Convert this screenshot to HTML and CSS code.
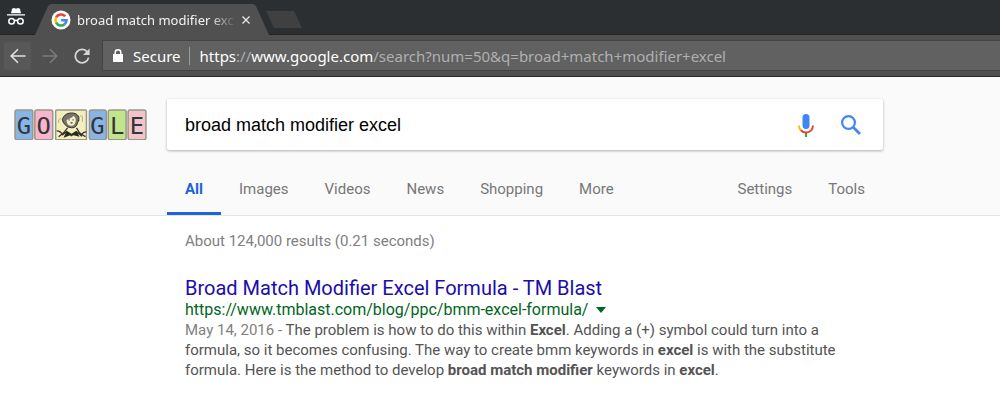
FILE: index.html
```html
<!DOCTYPE html>
<html lang="en">
<head>
<meta charset="utf-8">
<title>broad match modifier excel</title>
<link rel="stylesheet" href="styles.css">
</head>
<body>
<div class="tabstrip">
  <svg class="incognito" viewBox="0 0 18 18" aria-hidden="true">
    <path d="M5 .8 7 0 9 .7 11 0l2 .8 1 4.4H4zM0 6.2h18v1.4H0z" fill="#fff"/>
    <g fill="none" stroke="#fff" stroke-width="1.5"><circle cx="4.6" cy="13.2" r="2.8"/><circle cx="13.4" cy="13.2" r="2.8"/><path d="M7.4 12.8q1.6-1 3.2 0"/></g>
  </svg>
  <div class="tab">
    <svg class="favicon" viewBox="0 0 20 20" aria-hidden="true">
      <circle cx="10" cy="10" r="9.5" fill="#fff"/>
      <g fill="none" stroke-width="2.6">
        <path d="M14.2 6.4A5.6 5.6 0 0 0 5.1 7.4" stroke="#ea4335"/>
        <path d="M5.1 7.3a5.6 5.6 0 0 0 0 5.4" stroke="#fbbc05"/>
        <path d="M5.1 12.6a5.6 5.6 0 0 0 8.5 1.6" stroke="#34a853"/>
        <path d="M13.5 14.3a5.6 5.6 0 0 0 2-4H10.2" stroke="#4285f4"/>
      </g>
    </svg>
    <span class="tab-title">broad match modifier exc</span>
    <button class="tab-close" aria-label="Close tab"><svg viewBox="0 0 8 8"><path d="M.5.5l7 7m0-7l-7 7" stroke="#e8e8e8" stroke-width="1.3"/></svg></button>
  </div>
  <button class="new-tab" aria-label="New tab"></button>
</div>
<div class="toolbar">
  <button class="nav back" aria-label="Back"><svg viewBox="0 0 16 16"><path d="M15.5 8H1.5M8 1.2 1.2 8 8 14.8" fill="none" stroke="#e2e2e2" stroke-width="1.6"/></svg></button>
  <button class="nav forward" aria-label="Forward" disabled><svg viewBox="0 0 16 16"><path d="M.5 8h14M8 1.2 14.8 8 8 14.8" fill="none" stroke="#7b7b7b" stroke-width="1.6"/></svg></button>
  <button class="nav reload" aria-label="Reload"><svg viewBox="0 0 16 16"><path d="M13.4 4.1A6.7 6.7 0 1 0 14.6 9.6" fill="none" stroke="#d6d6d6" stroke-width="1.8"/><path d="M15.6.5v6.6H9z" fill="#d6d6d6"/></svg></button>
  <div class="address">
    <svg class="lock" viewBox="0 0 10 13" aria-hidden="true"><path d="M0 5h10v8H0z" fill="#fff"/><path d="M2.2 5.5V3.4a2.8 2.6 0 0 1 5.6 0v2.1" fill="none" stroke="#fff" stroke-width="1.5"/></svg>
    <span class="secure">Secure</span>
    <span class="url">https<span class="dim">://</span>www.google.com<span class="dim">/search?num=50&amp;q=broad+match+modifier+excel</span></span>
  </div>
</div>
<header class="header">
  <form class="search-row">
    <a class="logo" href="#" aria-label="Google">
      <svg viewBox="0 0 134 32">
        <g stroke="#99978b" stroke-width="1.5">
          <rect x="1" y="1" width="18" height="30" rx="2" fill="#86b5e6"/>
          <rect x="21" y="1" width="18" height="30" rx="2" fill="#f7b6cb"/>
          <rect x="42" y="1" width="31" height="30" rx="1" fill="#f3efbd"/>
          <rect x="76" y="1" width="17" height="30" rx="2" fill="#86b5e6"/>
          <rect x="95" y="1" width="18" height="30" rx="2" fill="#c2e58b"/>
          <rect x="115" y="1" width="18" height="30" rx="2" fill="#f2c3cb"/>
        </g>
        <g class="logo-letters"><text x="10" y="25">G</text><text x="30" y="25">O</text><text x="84" y="25">G</text><text x="104" y="25">L</text><text x="124" y="25">E</text></g>
        <path d="M50 14c-3-4 1-10 8-10s9 5 6 10q-1 5-6 5t-8-5z" fill="#77756a" stroke="#333229"/>
        <path d="M53 11q4-1 7-4 3 2 2 6-1 4-5 4-4-1-4-6z" fill="#f5f0cc"/>
        <path d="M55 11h1m3 0h1m-3 3h2" stroke="#333229" stroke-width="1.4"/>
        <path d="M43 22q4 0 6 4l4-3 5 4 5-4 5 4q1-4 5-4M54 19l-4 5-5 4m18-9 3 5 6 4" fill="none" stroke="#333229" stroke-width="1.3"/>
        <path d="M45 14v-3q2-3 3 0M66 12v-4q2-3 3 0v5" fill="none" stroke="#b5b08a"/>
        <path d="M53 22l5 3 5-3 3 6-8-2-8 3z" fill="#292821"/>
      </svg>
    </a>
    <div class="search-box">
      <input class="query" type="text" aria-label="Search" value="broad match modifier excel">
      <button class="icon-button" type="button" aria-label="Search by voice"><svg class="mic" viewBox="0 0 16 24"><rect x="4.5" y="1" width="7" height="15" rx="3.5" fill="#4285f4"/><path d="M8 20v4" stroke="#34a853" stroke-width="2.2"/><g fill="none" stroke-width="2"><path d="M1 12.5q0 3.2 2 5" stroke="#fbbc05"/><path d="M2.8 17.3Q5 19.6 8 19.6q6.4-.4 7-7.1" stroke="#ea4335"/></g></svg></button>
      <button class="icon-button" type="submit" aria-label="Search"><svg class="glass" viewBox="0 0 20 20"><circle cx="7.5" cy="7.5" r="6.4" fill="none" stroke="#4285f4" stroke-width="2.2"/><path d="M12.2 12.2 19 19" stroke="#4285f4" stroke-width="2.7"/></svg></button>
    </div>
  </form>
  <nav class="tabs">
    <a class="current" href="#">All</a><a href="#">Images</a><a href="#">Videos</a><a href="#">News</a><a href="#">Shopping</a><a href="#">More</a>
    <span class="tools"><a href="#">Settings</a><a href="#">Tools</a></span>
  </nav>
</header>
<main class="results">
  <p class="stats">About 124,000 results (0.21 seconds)</p>
  <article>
    <h3 class="title"><a href="#">Broad Match Modifier Excel Formula - TM Blast</a></h3>
    <div class="cite"><cite>https://www.tmblast.com/blog/ppc/bmm-excel-formula/</cite><button class="caret" aria-label="Result options"></button></div>
    <p class="snippet"><span class="date">May 14, 2016 - </span>The problem is how to do this within <b>Excel</b>. Adding a (+) symbol could turn into a formula, so it becomes confusing. The way to create bmm keywords in <b>excel</b> is with the substitute formula. Here is the method to develop <b>broad match modifier</b> keywords in <b>excel</b>.</p>
  </article>
</main>
</body>
</html>
```
FILE: styles.css
```css
* { box-sizing: border-box; }
body { margin: 0; background: #fff; font-family: Roboto, Arial, sans-serif; font-size: 15px; color: #545454; }
button { padding: 0; border: 0; background: none; }
svg { display: block; }
a { text-decoration: none; }

.tabstrip { display: flex; align-items: flex-end; height: 35px; background: #2b2f31; border-bottom: 1px solid #242424; }
.incognito { width: 18px; height: 18px; margin: 0 10px 8px 7px; }
.tab { display: flex; align-items: center; width: 234px; height: 31px; margin-bottom: -1px; padding: 0 22px 0 16px; background: #505050; clip-path: polygon(0 100%, 13px 2px, 16px 0, 218px 0, 221px 2px, 100% 100%); }
.favicon { flex: none; width: 20px; height: 20px; margin-right: 6px; }
.tab-title { flex: 1; white-space: nowrap; font: 13px/20px "Noto Sans", sans-serif; color: #f2f2f2; mask-image: linear-gradient(90deg, #000 84%, transparent 102%); }
.tab-close { margin-left: 8px; }
.tab-close svg { width: 8px; height: 8px; }
.new-tab { width: 36px; height: 17px; margin: 0 0 6px -3px; background: #404040; clip-path: polygon(0 0, 28px 0, 100% 100%, 8px 100%); }

.toolbar { display: flex; align-items: center; height: 42px; padding-left: 4px; background: #505050; border-bottom: 1px solid #282828; }
.nav { display: grid; place-items: center; width: 27px; height: 28px; margin-right: 5px; border-radius: 2px; }
.nav svg { width: 16px; height: 16px; }
.back { background: #585858; }
.address { display: flex; flex: 1; align-items: center; height: 31px; margin-left: 2px; padding-left: 10px; background: #616161; border: 1px solid #444; border-right: 0; font: 15px/22px "Noto Sans", sans-serif; color: #fff; white-space: nowrap; overflow: hidden; }
.lock { width: 10px; height: 13px; margin-right: 10px; }
.secure { margin-right: 10px; padding-right: 8px; line-height: 18px; border-right: 1px solid #9a9a9a; }
.dim { color: #b0b0b0; }

.header { background: #fafafa; border-bottom: 1px solid #e5e5e5; }
.search-row { display: flex; align-items: center; padding: 22px 20px 14px 14px; }
.logo { flex: none; width: 133px; margin-right: 20px; }
.logo-letters { font: 24px "DejaVu Sans Mono", monospace; fill: #34343a; text-anchor: middle; }
.search-box { display: flex; align-items: center; flex: 1; max-width: 716px; height: 51px; padding: 0 22px 0 18px; background: #fff; border-radius: 2px; box-shadow: 0 1px 3px rgba(0, 0, 0, .3); }
.query { flex: 1; min-width: 0; padding: 0; border: 0; outline: 0; background: none; font: 18px/24px "Liberation Sans", Arial, sans-serif; color: #000; }
.icon-button { margin-left: 27px; }
.mic { width: 16px; height: 24px; }
.glass { width: 20px; height: 20px; }

.tabs { display: flex; max-width: 883px; padding-left: 167px; font-size: 15px; line-height: 20px; }
.tabs a { padding: 15px 18px 13px; color: #777; border-bottom: 3px solid transparent; }
.tabs .current { color: #1a66d8; font-weight: 700; border-color: #1a66d8; }
.tools { display: flex; margin-left: auto; }

.results { max-width: 840px; padding: 15px 0 20px 185px; }
.stats { margin: 0 0 25px; font-size: 15px; line-height: 20px; color: #808080; }
.title { margin: 0; font-size: 20px; font-weight: 400; line-height: 24px; }
.title a { color: #1a0dab; }
.cite { display: flex; align-items: center; gap: 8px; line-height: 20px; color: #006621; }
.cite cite { font-style: normal; font-size: 16px; }
.caret { border: 5px solid transparent; border-top: 6px solid #006621; border-bottom: 0; }
.snippet { margin: 0; font-size: 15px; line-height: 20px; }
.date { color: #808080; }
```
